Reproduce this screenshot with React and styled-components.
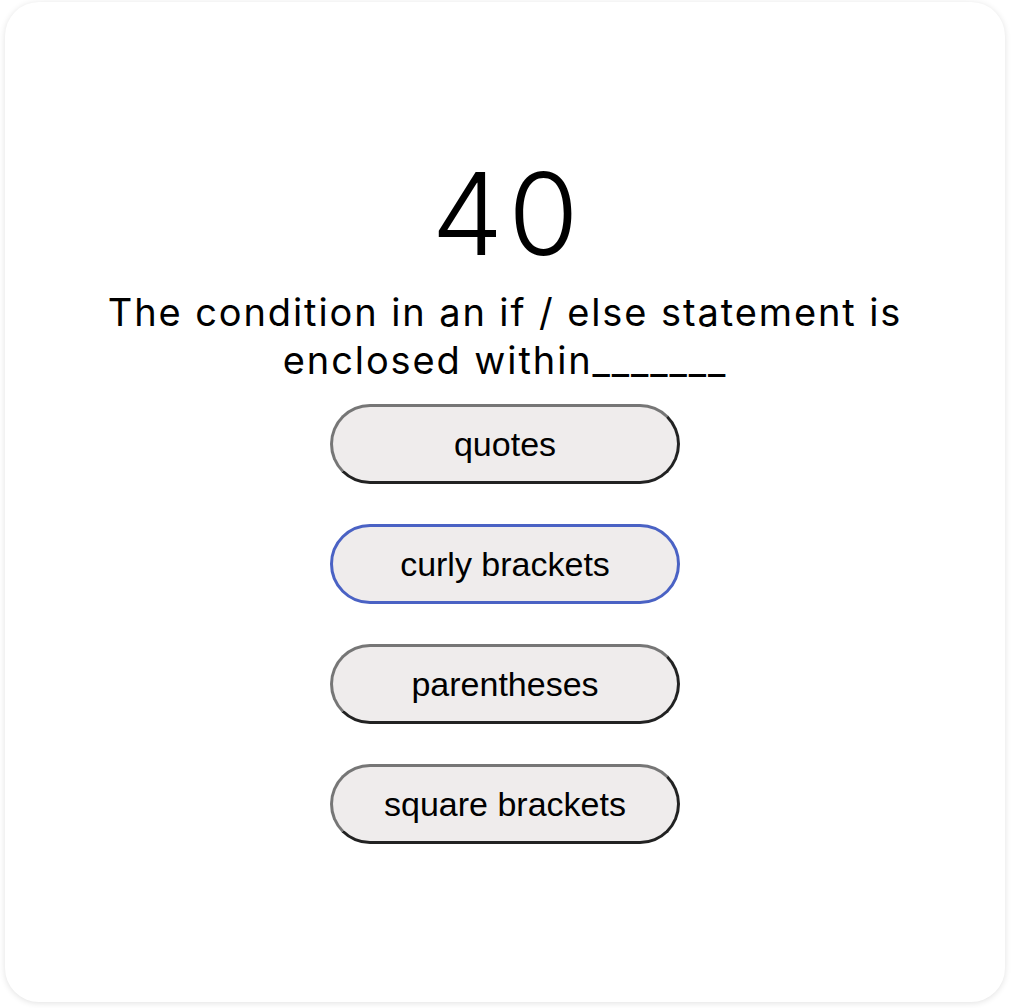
import React from "react";
import { useState } from "react";
import styled, { createGlobalStyle } from "styled-components";

const GlobalStyle = createGlobalStyle`
  body {
    margin: 0;
    background-color: #ffffff;
  }
`;

const Page = styled.div`
  width: 1016px;
  height: 1008px;
  padding: 2px 11px 6px 5px;
  box-sizing: border-box;
`;

const Card = styled.div`
  width: 1000px;
  height: 1000px;
  box-sizing: border-box;
  background-color: #ffffff;
  border-radius: 34px;
  box-shadow: 0 1px 6px rgba(0, 0, 0, 0.12);
  display: flex;
  flex-direction: column;
  align-items: center;
  padding-top: 148px;
`;

const Timer = styled.div`
  font-family: "Inter", "Noto Sans", sans-serif;
  font-weight: 300;
  font-size: 114px;
  line-height: 128px;
  letter-spacing: 5px;
  padding-left: 5px;
  color: #000000;
`;

const Question = styled.div`
  font-family: "Inter", "Noto Sans", sans-serif;
  font-weight: 400;
  font-size: 38px;
  line-height: 48px;
  letter-spacing: 1.9px;
  color: #000000;
  text-align: center;
  width: 880px;
  margin-top: 10px;
`;

const Options = styled.div`
  display: flex;
  flex-direction: column;
  gap: 40px;
  margin-top: 20px;
`;

const Option = styled.button`
  width: 350px;
  height: 80px;
  box-sizing: border-box;
  border-radius: 40px;
  background-color: #efecec;
  font-family: "Liberation Sans", Arial, sans-serif;
  font-size: 34px;
  padding-top: 2px;
  color: #000000;
  cursor: pointer;
  border-style: solid;
  border-width: 3px;
  border-color: ${(props) =>
    props.selected ? "#4a62c4" : "#767676 #222222 #222222 #767676"};
`;

const answers = ["quotes", "curly brackets", "parentheses", "square brackets"];

const App = () => {
  const [selected, setSelected] = useState("curly brackets");

  return (
    <>
      <GlobalStyle />
      <Page>
        <Card>
          <Timer>40</Timer>
          <Question>
            The condition in an if / else statement is enclosed within_______
          </Question>
          <Options>
            {answers.map((answer) => {
              return (
                <Option
                  key={answer}
                  selected={answer === selected}
                  onClick={() => setSelected(answer)}
                >
                  {answer}
                </Option>
              );
            })}
          </Options>
        </Card>
      </Page>
    </>
  );
};

export default App;
